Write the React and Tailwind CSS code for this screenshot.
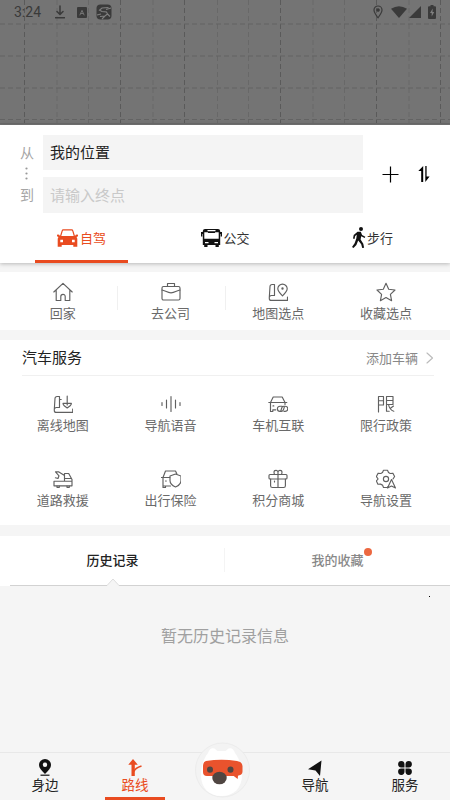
import { useState } from 'react';

const stroke = {
  fill: 'none',
  stroke: 'currentColor',
  strokeWidth: 1.15,
  strokeLinecap: 'round',
  strokeLinejoin: 'round',
};

// Line icons, all drawn on a 20x20 grid
const icons = {
  home: <path d="M.8 10 10 1.3 19.2 10M3.2 8v10.5h4.6v-4a2.2 2.2 0 0 1 4.4 0v4h4.6V8" />,
  company: (
    <>
      <rect x="1" y="4.5" width="18" height="13.5" rx="1.5" />
      <path d="M6.5 4.5v-3h7v3M1 8c3 .5 5.500 2.800 9 2.800s6-2.300 9-2.800" />
    </>
  ),
  mapPick: (
    <>
      <path d="M6.500 2.500H4a2 2 0 0 0-2 2L1.300 15.500M6.500 2.500v11H3.500a2 2 0 0 0-2.200 2v.9a2 2 0 0 0 2 2h16.200v-3.400" />
      <path d="M14.500 13.800c-2.400-2.200-4.700-4.400-4.700-7a4.700 4.700 0 0 1 9.400 0c0 2.600-2.300 4.800-4.700 7Z" />
      <circle cx="14.500" cy="6.500" r=".6" fill="currentColor" />
    </>
  ),
  star: <path d="m10 1.300 2.700 5.900 6.300.8-4.600 4.300 1.200 6.400-5.600-3.100-5.600 3.100 1.200-6.400L1 8l6.300-.8Z" />,
  offline: (
    <>
      <path d="M6.500 2.500H4a2 2 0 0 0-2 2L1.300 15.500M6.500 2.500v11H3.500a2 2 0 0 0-2.200 2v.9a2 2 0 0 0 2 2h16.400v-3.400M6.500 5.500h1.700" />
      <path d="M14.200 2v9M10 9.300h8.400q0 1.500-1.200 2.400l-3 2.300-3-2.300Q10 10.800 10 9.300Z" />
    </>
  ),
  voice: <path d="M1 8.500v3M5.500 6v8M10 2.500v15M14.500 6v8M19 8.500v3" />,
  carLink: (
    <>
      <path d="M2.500 8.500 5.200 3h9l2.800 5.500M.8 8.500h18M2.500 8.500v9h2.300v-1.700h3M17 8.500v2M5 11.900h.8" />
      <path d="M14.200 12.200H12a2.600 2.600 0 0 0 0 5.200h1.300c2.600 0 2.400-3.200 3-4.200M16 17.400h1.200a2.600 2.600 0 0 0 0-5.200h-1.300c-2.600 0-2.300 3-3 4.200" />
    </>
  ),
  limit: (
    <path d="M2.500 18V2.500h5v4.200h-5M7.500 6.700V11h-5M10.500 2.500H17v8h-6.500M10.500 6.500H17M10.500 2.500v14.700h2.700M12.500 10.500c.7 3.600 2.200 5.700 5.300 6.700M17.500 12l-2.700 2" />
  ),
  rescue: (
    <>
      <path d="M11.500 12V4.500h4.200l3.300 6v6.300H1v-4.600h18M11.500 9.500h6.800M11.500 6.500 5.500 2.800H2.500L6 6.800 5 9.500l-2.600-.7" />
      <path d="M4 17v1.300h2.300V17M14 17v1.300h2.300V17" />
    </>
  ),
  insurance: (
    <>
      <path d="M2 8.500 4.500 2h10l1.300 2.700M.3 8.500h8.500M2 8.500V17h7.500M2 17v1.500h2.500V17M4.500 12h.8" />
      <path d="M14.500 5 20 7v4.500c0 3-2.500 5.200-5.500 6.500C11.500 16.700 9 14.500 9 11.500V7Z" />
    </>
  ),
  gift: (
    <>
      <rect x="1" y="5.500" width="18" height="4.500" rx="1" />
      <path d="M2.600 10v6.700c0 1 .7 1.800 1.800 1.800h11.200c1.100 0 1.800-.8 1.800-1.800V10M10 5.500v13M10 5.500V3.300C10 .8 6 .8 6 3.300c0 .8.200 1.600.6 2.200M10 5.500V3.300c0-2.500 4-2.500 4 0 0 .8-.2 1.600-.6 2.200M6.500 12v1" />
    </>
  ),
  settings: (
    <>
      <path d="M12 17.500 11.500 18.500H7.500L6.500 16q-1.200-.3-2-1l-2.600.2L.4 12l1.700-2L.4 7.500l1.700-3.300 2.700.3L6.500 3.500 7.500 1.200h4l1 2.300 1.700 1 2.700-.3 1.700 3.300L17 10" />
      <circle cx="10" cy="10" r="2.600" />
      <path d="m15.500 10.500 4 8.500-4-2-4 2Z" />
    </>
  ),
};

const shortcuts = [
  { icon: 'home', label: '回家' },
  { icon: 'company', label: '去公司' },
  { icon: 'mapPick', label: '地图选点' },
  { icon: 'star', label: '收藏选点' },
];

const services = [
  { icon: 'offline', label: '离线地图' },
  { icon: 'voice', label: '导航语音' },
  { icon: 'carLink', label: '车机互联' },
  { icon: 'limit', label: '限行政策' },
  { icon: 'rescue', label: '道路救援' },
  { icon: 'insurance', label: '出行保险' },
  { icon: 'gift', label: '积分商城' },
  { icon: 'settings', label: '导航设置' },
];

function IconItem({ icon, label }) {
  return (
    <button className="flex flex-col items-center text-[#6a6a6a]">
      <svg viewBox="0 0 20 20" className="w-5 h-5 text-[#606060]" {...stroke}>
        {icons[icon]}
      </svg>
      <span className="mt-px text-[13px] leading-5">{label}</span>
    </button>
  );
}

function StatusBar() {
  return (
    <div className="relative flex items-center h-6 pl-3.5 pr-[14px] text-[#3a3a3a]">
      <span className="font-[Roboto] text-sm leading-none w-[41px]">3:24</span>
      <svg viewBox="0 0 10 14" className="w-2.5 h-3.5" {...stroke} strokeWidth="1.5">
        <path d="M5 1v8M2 6.500l3 3 3-3M.5 12.700h9" />
      </svg>
      <svg viewBox="0 0 10 11" className="w-2.5 h-[11px] ml-3">
        <rect width="10" height="11" rx="1" fill="currentColor" />
        <path d="m2.800 8.300 2.200-5 2.200 5M3.700 6.500h2.600" fill="none" stroke="#747474" />
      </svg>
      <svg viewBox="0 0 16 16" className="w-4 h-4 ml-[9px]">
        <rect x=".5" y=".5" width="15" height="15" rx="4" fill="currentColor" />
        <path d="M12.500 3.500 6 4 3.500 6.200 6 7.500l4.500.5 1 2-2.500 2-5 .5M1 11l4-1M10 5.500l5-1.500M6 15l3-3M11 9.500l3 3" fill="none" stroke="#808080" strokeWidth="1.100" />
      </svg>
      <div className="flex-1"></div>
      <svg viewBox="0 0 10 14" className="w-2.5 h-3.5" {...stroke} strokeWidth="1.200">
        <path d="M5 12.800C3 10 1 7.500 1 5a4 4 0 0 1 8 0c0 2.500-2 5-4 7.800Z" />
        <circle cx="5" cy="5" r="1.200" fill="currentColor" />
      </svg>
      <svg viewBox="0 0 16 12" className="w-4 h-3 ml-[8px]">
        <path d="M0 2.800Q8-2.500 16 2.800L8 12Z" fill="currentColor" />
      </svg>
      <svg viewBox="0 0 12 12" className="w-3 h-3 ml-0.5">
        <path d="M12 0v12H0Z" fill="currentColor" />
      </svg>
      <svg viewBox="0 0 8 14" className="w-2 h-3.5 ml-[7px]">
        <path d="M2.500 0h3v1.200H7q1 0 1 1V13q0 1-1 1H1q-1 0-1-1V2.200q0-1 1-1h1.500Z" fill="currentColor" />
        <path d="M4.700 3.500 2 8h1.700v3.500L6.200 7H4.500Z" fill="#808080" />
      </svg>
    </div>
  );
}

function MapHeader() {
  const columns = [24.5, 57, 88.5, 120.5, 153, 184.5, 217.5, 248.5, 280.5, 313, 344.5, 376.5, 409, 440.5];
  const strong = [24.5, 120.5, 184.5, 280.5, 376.5, 440.5];
  return (
    <header className="relative h-[125px] shrink-0 bg-[#747474]">
      <svg viewBox="0 0 450 125" className="absolute inset-0 w-full h-full" fill="none" stroke="#636363" strokeDasharray="5 3">
        {columns.map((x) => (
          <path key={x} d={`M${x} 0V124`} stroke={strong.includes(x) ? '#5a5a5a' : '#686868'} />
        ))}
        {[24, 56, 88, 119.5].map((y) => (
          <path key={y} d={`M0 ${y}H450`} />
        ))}
        <path d="M0 123.500H450" stroke="#696969" strokeDasharray="none" />
      </svg>
      <StatusBar />
    </header>
  );
}

function RouteForm() {
  return (
    <div className="flex pt-2.5 pl-5">
      <div className="w-[23px] flex flex-col text-[14px] text-[#a5a5a5]">
        <span className="h-[35px] leading-[34px]">从</span>
        <svg viewBox="0 0 14 13" className="w-3.5 h-[13px] -my-[3px]" fill="#999">
          <circle cx="6.500" cy="1.500" r="1.100" />
          <circle cx="6.500" cy="6.500" r="1.100" />
          <circle cx="6.500" cy="11.500" r="1.100" />
        </svg>
        <span className="h-9 leading-[35px]">到</span>
      </div>
      <div className="w-80 flex flex-col gap-[7px] text-[15px]">
        <div className="h-[35px] leading-[34px] px-[7px] bg-[#f4f4f4] text-[#222]">我的位置</div>
        <div className="h-9 leading-9 px-[7px] bg-[#f4f4f4] text-[#c9c9c9]">请输入终点</div>
      </div>
      <div className="flex items-center h-[78px] ml-[19px] text-black">
        <svg viewBox="0 0 17 17" className="w-[17px] h-[17px]" fill="none" stroke="currentColor" strokeWidth="1.200">
          <path d="M8.500 .5v16M.5 8.500h16" />
        </svg>
        <svg viewBox="0 0 12 16" className="w-3 h-4 ml-[19px]">
          <path d="M5.200 0v16H3.200V5H.3ZM7.300 0h1.300v10.500h3L7.300 16Z" fill="currentColor" />
        </svg>
      </div>
    </div>
  );
}

function CarIcon() {
  return (
    <svg viewBox="0 0 21 18" className="w-[21px] h-[18px]">
      <path d="M3.500 7.500 5.200 1.800Q5.500.8 6.200.8h8.600q.7 0 1 1L17.500 7.500" fill="none" stroke="currentColor" strokeWidth="1.200" />
      <path d="M0 5.800q2-.8 3 1.200h15q1-2 3-1.200v1.500l-1.500.7q.8 1 .8 2.200v7.600h-4v-1.800H4.700v1.800h-4v-7.600q0-1.200.8-2.200L0 7.300Z" fill="currentColor" />
      <path d="M3.300 12h2.700M15 12h2.700" stroke="#fff" strokeWidth="2.400" />
    </svg>
  );
}

function BusIcon() {
  return (
    <svg viewBox="0 0 21 18" className="w-[21px] h-[18px]">
      <path d="M4 0h13q2 0 2.200 2v1H21v4.500h-1.300V5h-.5v11h-1.400v2h-3.300v-2h-8v2H3.200v-2H1.800V5h-.5v2.500H0V3h1.800V2Q2 0 4 0Z" fill="currentColor" />
      <path d="M3.300 3.200h3.400l.5.800h6.600l.5-.8h3.400v6.600H3.300Z" fill="#fff" />
      <path d="M6.500 1.600h8M4 13.700h3.500M13.500 13.700h3.500" stroke="#fff" strokeWidth="1.200" />
    </svg>
  );
}

function WalkIcon() {
  return (
    <svg viewBox="0 0 14 21" className="w-3.5 h-[21px]">
      <circle cx="9" cy="2" r="2" fill="currentColor" />
      <path d="M5.500 4.800h3.300l1.300 3.200 3.200 1.700-.6 1.300-3.500-1.800-.6 3.300 2.700 4.200.8 4-1.900.3-1-3.800-3-3.700-1.800 4.500L1.500 21 0 20l2.600-3.700 1.700-4.900.5-3.700-1.600 1.200-.7 3L1 11.500 1.700 8Z" fill="currentColor" />
    </svg>
  );
}

const modes = [
  { id: 'drive', label: '自驾', Icon: CarIcon, spacing: 'gap-[2px]' },
  { id: 'bus', label: '公交', Icon: BusIcon, spacing: 'gap-[1px] ml-[51px]' },
  { id: 'walk', label: '步行', Icon: WalkIcon, spacing: 'gap-[1px] ml-[54px]' },
];

function ModeTabs() {
  const [mode, setMode] = useState('drive');
  return (
    <div className="flex h-[49px] mt-[1px] pl-[35px]">
      {modes.map(({ id, label, Icon, spacing }) => (
        <button
          key={id}
          onClick={() => setMode(id)}
          className={`w-[93px] pt-px flex items-center justify-center text-[13px] border-b-[3px] ${spacing} ${
            mode === id ? 'text-[#e94b20] border-[#e94b20]' : 'text-[#111] border-transparent'
          }`}
        >
          <Icon />
          <span className={mode === id ? '' : 'text-[#333]'}>{label}</span>
        </button>
      ))}
    </div>
  );
}

function BottomNav() {
  return (
    <nav className="relative grid grid-cols-5 h-12 shrink-0 border-t border-[#e8e8e8] bg-[#f5f5f5] text-[13.5px] leading-5 text-[#222]">
      <button className="flex flex-col items-center justify-start pt-1.5">
        <svg viewBox="0 0 14 17" className="w-3.5 h-[17px]">
          <path d="M7 15C3.500 11.500 1 9 1 6a6 6 0 0 1 12 0c0 3-2.500 5.500-6 9Z" fill="#111" />
          <circle cx="7" cy="5.800" r="2.200" fill="#f5f5f5" />
          <path d="M2.500 16.200h9" stroke="#111" strokeWidth="1.200" />
        </svg>
        <span className="-mt-0.5">身边</span>
      </button>
      <button className="flex flex-col items-center justify-start pt-1.5 mx-[15px] w-[60px] border-b-4 border-[#e94b20] text-[#e94b20]">
        <svg viewBox="0 0 14 17" className="w-3.5 h-[17px]">
          <path d="M5 0 9.800 5.700H6.800V17H3.500V5.700H.3Z" fill="currentColor" />
          <path d="M6 12.500q1-3.500 7.500-5.500" fill="none" stroke="currentColor" strokeWidth="1.500" />
        </svg>
        <span className="-mt-0.5">路线</span>
      </button>
      <div className="flex justify-center">
        <svg viewBox="0 0 56 60" className="relative w-14 h-[60px] -mt-[12px] -left-[3px]">
          <circle cx="28.500" cy="29" r="27" fill="#f3f3f3" stroke="#ececec" />
          <path d="M14 12q2-6 6.500-4.500l3 2.500h8l3-2.500Q39 6 41 12c4 5 7 13 7 22 0 13-8 21-20.500 21S7 47 7 34c0-9 3-17 7-22Z" fill="#fff" />
          <path d="M12 20q15.500-2.500 31 0 5.500 1 5.500 5v5.500q0 3.500-4 4l-.5.300-.3 3.200-4-3H13q-4 0-4-4V25q0-4 3-5Z" fill="#e9532d" />
          <ellipse cx="16" cy="28.600" rx="3" ry="3.200" fill="#504642" />
          <ellipse cx="36.500" cy="28.600" rx="3" ry="3.200" fill="#504642" />
          <ellipse cx="25.500" cy="37" rx="7.200" ry="6.300" fill="#504642" />
        </svg>
      </div>
      <button className="flex flex-col items-center justify-start pt-1.5">
        <svg viewBox="0 0 14 17" className="w-3.5 h-[17px]">
          <path d="M13.500 1.500 0 10.200l7.500 1.300L12 17Z" fill="#111" />
        </svg>
        <span className="-mt-0.5">导航</span>
      </button>
      <button className="flex flex-col items-center justify-start pt-1.5">
        <svg viewBox="0 0 14 17" className="w-3.5 h-[17px]" fill="#111">
          <path d="M6.500 8.500H3.200A3.200 3.200 0 1 1 6.500 5.200ZM7.500 8.500h3.300a3.200 3.200 0 1 0-3.300-3.300ZM6.500 9.500H3.200a3.200 3.200 0 1 0 3.300 3.300ZM7.500 9.500h3.300a3.200 3.200 0 1 1-3.300 3.300Z" />
        </svg>
        <span className="-mt-0.5">服务</span>
      </button>
    </nav>
  );
}

export default function App() {
  return (
    <div className="w-[450px] h-[800px] flex flex-col overflow-hidden bg-[#f5f5f5] font-['Noto_Sans_CJK_SC',sans-serif]">
      <MapHeader />

      {/* Origen y destino */}
      <section className="relative h-[138px] shrink-0 bg-white shadow-[0_1px_4px_rgba(0,0,0,0.25)]">
        <RouteForm />
        <ModeTabs />
      </section>

      {/* Accesos rápidos */}
      <section className="grid grid-cols-4 h-[58px] mt-[9px] shrink-0 pl-[9px] pr-2.5 pt-2.5 bg-white">
        {shortcuts.map((item, index) => (
          <div key={item.label} className="relative flex justify-center">
            <IconItem {...item} />
            {index < 2 && <i className="absolute -right-px top-1 h-6 w-px bg-[#f0f0f0]"></i>}
          </div>
        ))}
      </section>

      {/* Servicios del auto */}
      <section className="h-[185px] mt-2.5 shrink-0 bg-white">
        <div className="flex items-center justify-between h-9 ml-[22px] mr-[16px] border-b border-[#f0f0f0]">
          <h2 className="text-[15px] text-[#222]">汽车服务</h2>
          <button className="flex items-center gap-[8px] text-[13px] text-[#888]">
            添加车辆
            <svg viewBox="0 0 8 12" className="w-2 h-3 text-[#bbb]" {...stroke}>
              <path d="m1 1 5.500 5L1 11" />
            </svg>
          </button>
        </div>
        <div className="grid grid-cols-4 gap-y-[34px] pl-[9px] pr-2.5 pt-[18px]">
          {services.map((item) => (
            <IconItem key={item.label} {...item} />
          ))}
        </div>
      </section>

      {/* Historial */}
      <section className="flex-1 mt-[11px]">
        <div className="relative grid grid-cols-2 h-[50px] pb-0.5 bg-white text-[13px] font-medium">
          <button className="text-[#222]">历史记录</button>
          <button className="text-[#888]">
            <span className="relative">
              我的收藏
              <i className="absolute -right-2 -top-[2px] w-2 h-2 rounded-full bg-[#ec6841]"></i>
            </span>
          </button>
          <i className="absolute left-56 top-3 w-px h-6 bg-[#f4f4f4]"></i>
          <i className="absolute left-2.5 right-0 bottom-0 h-px bg-[#d2d2d2]"></i>
          <svg viewBox="0 0 12 8" className="absolute left-[107px] bottom-0 w-3 h-2">
            <path d="M0 7.500 6 1l6 6.500V8H0Z" fill="#f5f5f5" />
            <path d="M0 7.500 6 1l6 6.500" fill="none" stroke="#ddd" />
          </svg>
          <i className="absolute left-[429px] -bottom-[11px] size-px bg-black"></i>
        </div>
        <p className="pt-[37px] text-center text-[16px] leading-6 text-[#a0a0a0]">暂无历史记录信息</p>
      </section>

      <BottomNav />
    </div>
  );
}
